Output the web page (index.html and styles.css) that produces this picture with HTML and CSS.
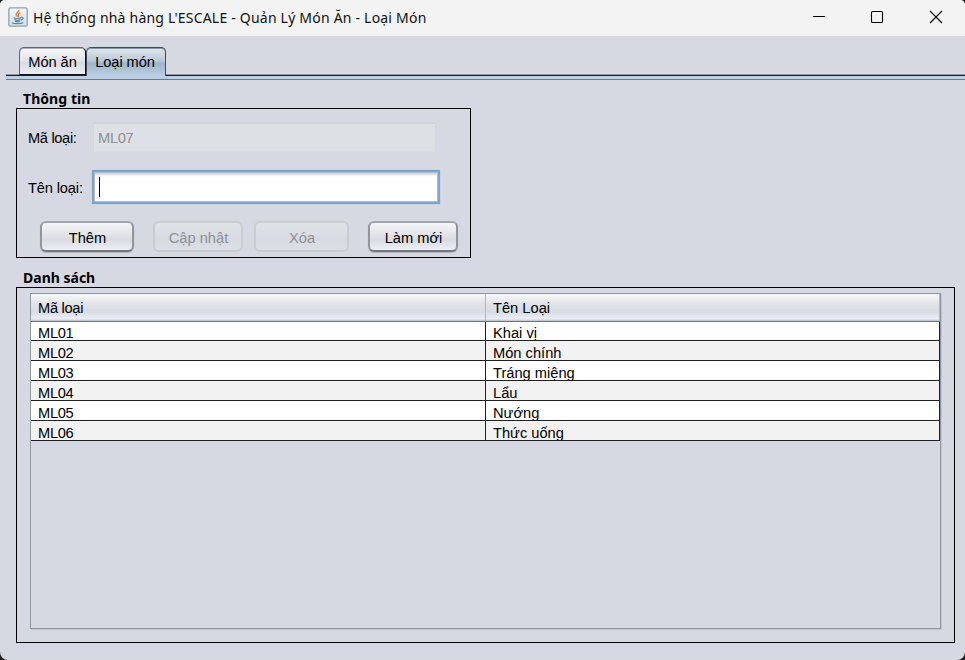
FILE: index.html
```html
<!DOCTYPE html>
<html lang="vi">
<head>
<meta charset="utf-8">
<title>Hệ thống nhà hàng L'ESCALE - Quản Lý Món Ăn - Loại Món</title>
<link rel="stylesheet" href="styles.css">
</head>
<body>
<div class="window">
  <header class="titlebar">
    <svg class="app-icon" width="20" height="20" viewBox="0 0 20 20">
      <defs><linearGradient id="tile" x1="0" y1="0" x2="0" y2="1"><stop offset="0" stop-color="#f4f7f9"/><stop offset="1" stop-color="#d3dfe7"/></linearGradient></defs>
      <rect x=".8" y=".8" width="18.4" height="18.4" rx="1.5" fill="url(#tile)" stroke="#8ba5b8" stroke-width="1.3"/>
      <path d="M10.800 3c.8 2-3.200 2.800-2.600 4.800.2.800 1 1.200 1.200 1.900M12.300 5.700c-2 .8-2.600 1.600-1.700 2.800.4.600.1 1.200-.4 1.600" fill="none" stroke="#e88a4c" stroke-width="1.500"/>
      <path d="M5.500 10.700c2 .9 6 .9 7.800 0M6.300 12.700c2 .7 4.500.7 6.200 0M7 14.300c1.600.5 3.400.5 4.800 0M13.300 10.500c2.400-.6 2.300 1.800-.3 2.500M4 15.700c2.500 1.400 9 1.300 11.300-.2" fill="none" stroke="#6088a6" stroke-width="1.300"/>
    </svg>
    <h1 class="title">Hệ thống nhà hàng L'ESCALE - Quản Lý Món Ăn - Loại Món</h1>
    <div class="controls">
      <svg width="12" height="12" viewBox="0 0 12 12"><path d="M1 5.500h12"/></svg>
      <svg width="12" height="12" viewBox="0 0 12 12"><rect x=".5" y=".5" width="11" height="11" rx="1"/></svg>
      <svg width="12" height="12" viewBox="0 0 12 12"><path d="M0 0l12 12M12 0L0 12"/></svg>
    </div>
  </header>
  <nav class="tabs">
    <div class="tab tab-first">Món ăn</div>
    <div class="tab tab-active">Loại món</div>
  </nav>
  <main class="content">
    <h2 class="group-title">Thông tin</h2>
    <section class="group form">
      <div class="field"><label>Mã loại:</label><div class="input input-disabled">ML07</div></div>
      <div class="field field-name"><label>Tên loại:</label><div class="input input-focus"><span class="caret"></span></div></div>
      <div class="buttons">
        <button class="btn add">Thêm</button>
        <button class="btn update" disabled>Cập nhật</button>
        <button class="btn delete" disabled>Xóa</button>
        <button class="btn refresh">Làm mới</button>
      </div>
    </section>
    <h2 class="group-title list-title">Danh sách</h2>
    <section class="group list">
      <div class="table">
        <div class="row head"><div>Mã loại</div><div>Tên Loại</div></div>
        <div class="row"><div>ML01</div><div>Khai vị</div></div>
        <div class="row"><div>ML02</div><div>Món chính</div></div>
        <div class="row"><div>ML03</div><div>Tráng miệng</div></div>
        <div class="row"><div>ML04</div><div>Lẩu</div></div>
        <div class="row"><div>ML05</div><div>Nướng</div></div>
        <div class="row"><div>ML06</div><div>Thức uống</div></div>
      </div>
    </section>
  </main>
</div>
</body>
</html>
```
FILE: styles.css
```css
* { box-sizing: border-box; }
body { margin: 0; background: #202020; font: 14.67px "Liberation Sans", Arial, sans-serif; color: #000; overflow: hidden; }
.window { width: 965px; height: 660px; background: #d6d9e1; border-radius: 5px 5px 8px 8px; overflow: hidden; }
.titlebar { height: 36px; background: #f3f3f3; display: flex; align-items: center; padding: 0 23px 2px 8px; }
.app-icon { margin-top: -1px; }
.title { margin: 1px auto 0 5px; font: 400 14px/20px "Noto Sans", sans-serif; letter-spacing: .21px; color: #111; white-space: nowrap; }
.controls { display: flex; gap: 47px; }
.controls svg { overflow: visible; fill: none; stroke: #000; stroke-width: 1.1; }
.tabs { height: 44px; margin-left: 6px; padding: 11px 0 0 13px; display: flex; background: linear-gradient(#9497a3 0 1px, #1c1c2c 1px 2px, #bccfe4 2px 5px, #697b91 5px 6px) 0 38px / 100% 6px no-repeat; }
.tab { height: 28px; line-height: 28px; text-align: center; border: 1px solid #62656e; border-bottom: 1px solid #10121a; border-radius: 5px 5px 0 0; background: linear-gradient(#f5f6f8, #e2e4e9 50%, #d8dbe2 55%, #eceef5); box-shadow: inset 0 1px #adafb5; letter-spacing: -.08px; }
.tab-first { width: 67px; border-right-color: #10121a; }
.tab-active { width: 80px; height: 29px; padding-right: 2px; border-color: #3d4b60; border-bottom: 0; background: linear-gradient(#e0e8ee, #b9cad8 45%, #9fb5c9 55%, #bccfe4); box-shadow: inset 0 1px #8797a6; }
.content { padding: 9px 10px 0 16px; }
.group-title { margin: 0; padding-left: 7px; height: 19px; font: 700 14px/20px "Noto Sans", sans-serif; letter-spacing: .06px; }
.group { border: 1px solid #000; }
.form { width: 455px; height: 150px; padding: 13px 0 0 11px; }
.field { display: flex; align-items: center; height: 33px; }
.field label { width: 65px; margin-top: -2px; white-space: nowrap; letter-spacing: -.35px; }
.field-name { margin-top: 15px; }
.field-name label { margin-top: 3px; letter-spacing: -.15px; }
.input { display: flex; align-items: center; }
.input-disabled { width: 343px; height: 30px; margin-top: -3px; padding: 0 0 0 4px; background: #dde0e4; color: #8e9095; border: 1px solid #d3d6db; border-top: 2px solid #d0d3d8; border-bottom-color: #dadde2; letter-spacing: -.3px; }
.input-focus { width: 348px; height: 34px; margin-left: -1px; border: 2px solid #7aa5d0; background: #fff; box-shadow: inset 0 0 0 1px #b9bcc2, inset 0 3px 2px #d4d5d8, 0 0 1px #8fb3d8; padding-left: 5px; }
.caret { width: 1px; height: 20px; background: #000; }
.buttons { display: flex; margin: 18px 0 0 12px; }
.btn { height: 31px; padding: 2px 0 0 1px; font: inherit; color: #000; border: 2px solid #92959c; border-top-color: #a2a5ac; border-bottom-color: #74777e; border-radius: 6px; background: linear-gradient(#f6f7f9, #e2e4e9 45%, #d8dbe2 60%, #f1f3fa) border-box; box-shadow: 0 1px 1px #b4b7bf; }
.btn:disabled { color: #8e9095; border-color: #c9ccd3; background: linear-gradient(#dfe2e6, #d7dae1 60%, #dbdee5); box-shadow: none; }
.add { width: 94px; }
.update { width: 90px; margin-left: 19px; }
.delete { width: 95px; margin-left: 11px; }
.refresh { width: 90px; margin-left: 19px; }
.list-title { margin-top: 10px; letter-spacing: 0; }
.list { height: 356px; padding: 5px 13px 13px; }
.table { height: 336px; border: 1px solid #9297a1; box-shadow: 1px 1px #c2c5ce; }
.row { display: grid; grid-template-columns: 455px 454px; height: 20px; background: #fff; border-bottom: 1px solid #202024; }
.row:nth-child(odd) { background: #f2f2f2; }
.row div { padding-left: 7px; line-height: 24px; height: 19px; overflow: hidden; border-right: 1px solid #202024; }
.row div:first-child { letter-spacing: -.3px; }
.row.head { position: relative; z-index: 1; height: 28px; margin-bottom: -1px; background: linear-gradient(#f7f8f9, #e2e4e8 35%, #d8dbe2 65%, #eceef7 92%, #b9bcc8); border-bottom-color: #72757f; }
.row.head div { height: 27px; line-height: 28px; border-right-color: #b3b6bf; }
```
